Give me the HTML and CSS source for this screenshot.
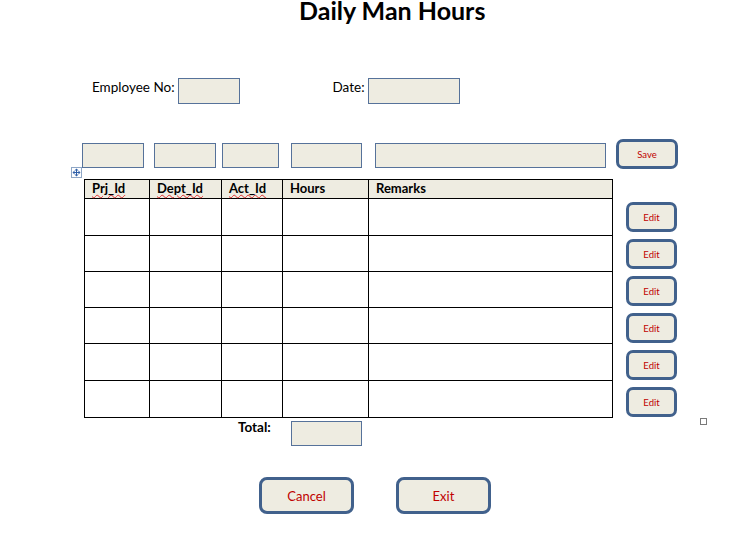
FILE: index.html
```html
<!DOCTYPE html>
<html>
<head>
<meta charset="utf-8">
<title>Daily Man Hours</title>
<link rel="stylesheet" href="styles.css">
</head>
<body>
<div class="page">
  <h1 class="title">Daily Man Hours</h1>

  <div class="emp-row">
    <span class="label">Employee No:</span><span class="field f-emp"></span>
    <span class="label date-label">Date:</span><span class="field f-date"></span>
  </div>

  <div class="input-row">
    <span class="field f1"></span>
    <span class="field f2"></span>
    <span class="field f3"></span>
    <span class="field f4"></span>
    <span class="field f5"></span>
    <button class="btn small save">Save</button>
  </div>

  <div class="grid-area">
    <div class="table-wrap">
      <span class="handle">
        <svg width="11" height="11" viewBox="0 0 11 11">
          <rect x="0.5" y="0.5" width="10" height="10" fill="#fff" stroke="#8ea6c6"/>
          <path d="M5.5 3v5M3 5.5h5" stroke="#2f5fa8" stroke-width="1"/>
          <path d="M5.5 1.5l-2 2h4zM5.5 9.5l-2-2h4zM1.5 5.5l2-2v4zM9.5 5.5l-2-2v4z" fill="#2f5fa8"/>
        </svg>
      </span>
      <table class="grid">
        <colgroup>
          <col class="c1"><col class="c2"><col class="c3"><col class="c4"><col class="c5">
        </colgroup>
        <thead>
          <tr>
            <th><span class="sp">Prj_Id</span></th>
            <th><span class="sp">Dept_Id</span></th>
            <th><span class="sp">Act_Id</span></th>
            <th>Hours</th>
            <th>Remarks</th>
          </tr>
        </thead>
        <tbody>
          <tr class="r37"><td></td><td></td><td></td><td></td><td></td></tr>
          <tr class="r36"><td></td><td></td><td></td><td></td><td></td></tr>
          <tr class="r36"><td></td><td></td><td></td><td></td><td></td></tr>
          <tr class="r36"><td></td><td></td><td></td><td></td><td></td></tr>
          <tr class="r37"><td></td><td></td><td></td><td></td><td></td></tr>
          <tr class="r37"><td></td><td></td><td></td><td></td><td></td></tr>
        </tbody>
      </table>
      <div class="total-row">
        <span class="total-label">Total:</span>
        <span class="field f-total"></span>
      </div>
    </div>
    <div class="edit-col">
      <button class="btn small edit">Edit</button>
      <button class="btn small edit">Edit</button>
      <button class="btn small edit">Edit</button>
      <button class="btn small edit">Edit</button>
      <button class="btn small edit">Edit</button>
      <button class="btn small edit">Edit</button>
    </div>
  </div>

  <span class="anchor"></span>

  <div class="bottom-row">
    <button class="btn big">Cancel</button>
    <button class="btn big">Exit</button>
  </div>
</div>
</body>
</html>
```

FILE: styles.css
```css
html, body {
  margin: 0;
  padding: 0;
  background: #ffffff;
}

body {
  font-family: Lato, "Open Sans", "Liberation Sans", sans-serif;
  color: #000;
}

.page {
  position: relative;
  width: 755px;
  height: 533px;
  overflow: hidden;
}

.title {
  margin: 0;
  padding-left: 299px;
  font-size: 25px;
  font-weight: 700;
  line-height: 20px;
  height: 20px;
}

.field {
  display: block;
  box-sizing: border-box;
  border: 1px solid #56729a;
  background: #eeece1;
  height: 24px;
}

.emp-row {
  display: flex;
  align-items: flex-start;
  margin-top: 58px;
  padding-left: 92px;
  height: 26px;
}

.label {
  font-size: 13.5px;
  line-height: 18px;
  margin-right: 3px;
}

.f-emp { width: 62px; height: 26px; }
.f-date { width: 92px; height: 26px; }

.date-label { margin-left: 93px; }

.input-row {
  display: flex;
  align-items: flex-start;
  margin-top: 35px;
  padding-left: 82px;
}

.input-row .field { margin-top: 4px; height: 25px; }
.f1 { width: 62px; }
.f2 { width: 62px; margin-left: 10px; }
.f3 { width: 57px; margin-left: 6px; }
.f4 { width: 71px; margin-left: 12px; }
.f5 { width: 231px; margin-left: 13px; }

.btn {
  box-sizing: border-box;
  border: 3px solid #41618c;
  border-radius: 7px;
  background: #eeece1;
  color: #c00000;
  font-family: Lato, "Open Sans", "Liberation Sans", sans-serif;
  padding: 0;
  display: block;
}

.btn.small { font-size: 9.5px; }

.save {
  width: 62px;
  height: 30px;
  margin-left: 10px;
}

.grid-area {
  display: flex;
  align-items: flex-start;
  margin-top: 10px;
  padding-left: 84px;
}

.table-wrap {
  position: relative;
  width: 528px;
}

.handle {
  position: absolute;
  left: -13px;
  top: -12px;
  width: 11px;
  height: 11px;
  line-height: 0;
}

.grid {
  border-collapse: collapse;
  table-layout: fixed;
  width: 528px;
}

.grid col.c1 { width: 65px; }
.grid col.c2 { width: 72px; }
.grid col.c3 { width: 61px; }
.grid col.c4 { width: 86px; }
.grid col.c5 { width: 244px; }

.grid th, .grid td {
  border: 1px solid #000;
  padding: 0 0 0 7px;
}

.grid th {
  background: #eeece1;
  height: 18px;
  font-size: 13px;
  font-weight: 700;
  text-align: left;
  line-height: 16px;
  vertical-align: top;
}

.sp {
  text-decoration: underline wavy #e03030;
  text-decoration-thickness: 1px;
  text-underline-offset: 1px;
}

.grid tr.r37 td { height: 36px; }
.grid tr.r36 td { height: 35px; }

.total-row {
  display: flex;
  align-items: flex-start;
  padding-left: 154px;
  margin-top: 3px;
}

.total-label {
  font-size: 13.5px;
  font-weight: 700;
  line-height: 14px;
  margin-top: -1px;
}

.f-total {
  width: 71px;
  height: 25px;
  margin-left: 20px;
}

.edit-col {
  display: flex;
  flex-direction: column;
  gap: 7px;
  margin-left: 14px;
  padding-top: 23px;
}

.edit {
  width: 51px;
  height: 30px;
}

.anchor {
  position: absolute;
  left: 700px;
  top: 418px;
  width: 5px;
  height: 5px;
  border: 1px solid #7a7a7a;
  background: #fff;
}

.bottom-row {
  display: flex;
  gap: 42px;
  margin-top: 31px;
  padding-left: 259px;
}

.btn.big {
  width: 95px;
  height: 37px;
  font-size: 13px;
  border-radius: 8px;
}
```
